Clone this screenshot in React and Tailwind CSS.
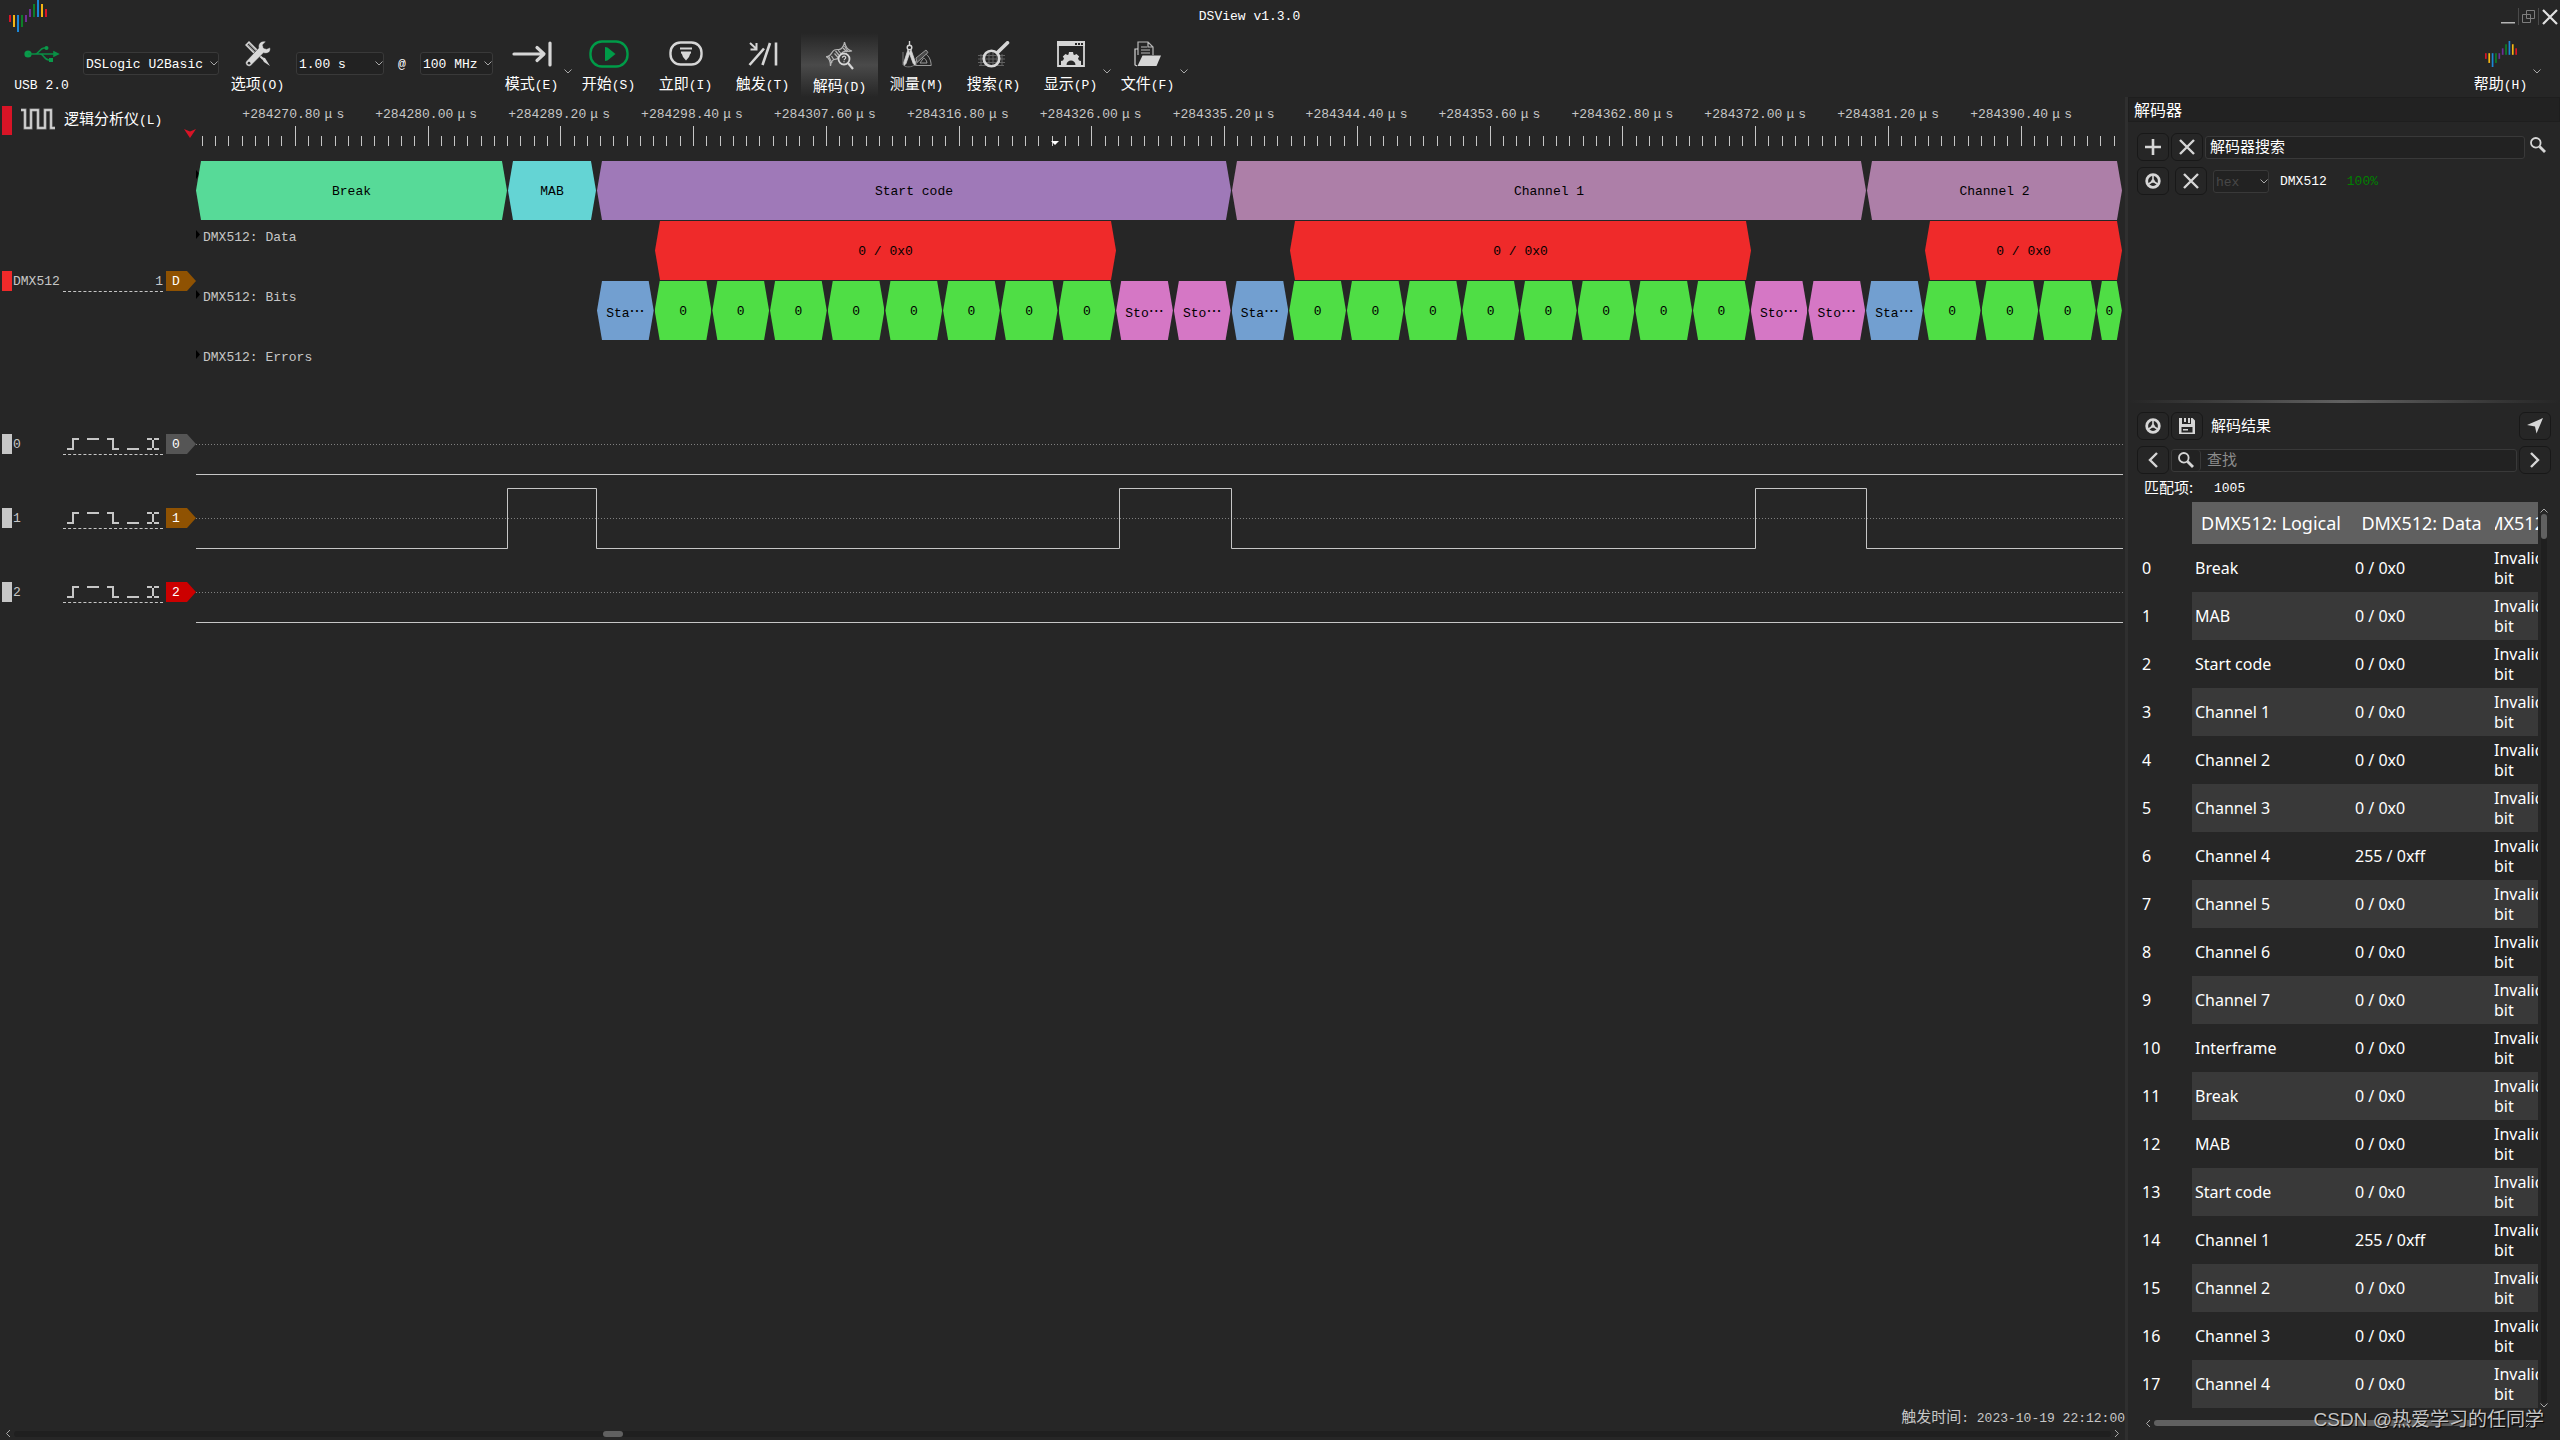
import React, { useState } from "react";
import clsx from "clsx";

const LOGO_BARS = [
    { x: 0, y: 15, h: 7, fill: "#d81426" },
    { x: 4, y: 15, h: 12, fill: "#f5b513" },
    { x: 8, y: 15, h: 17, fill: "#1b87d6" },
    { x: 12, y: 15, h: 12, fill: "#0d7f28" },
    { x: 16, y: 15, h: 7, fill: "#6f2f94" },
    { x: 20, y: 9, h: 8, fill: "#6f2f94" },
    { x: 24, y: 4, h: 13, fill: "#0d7f28" },
    { x: 28, y: 0, h: 17, fill: "#1b87d6" },
    { x: 32, y: 4, h: 13, fill: "#f5b513" },
    { x: 36, y: 9, h: 8, fill: "#d81426" },
];

// The visible time span is 1927 units wide, one unit per pixel at full size
const SPAN = 1927;
const BIT = 57.7;

const green = "bg-[#4fde45]";
const pink = "bg-[#d577c5]";
const blue = "bg-[#729fd0]";
const red = "bg-[#ef2a2a]";

const frame = (n) => [
    { w: BIT, text: "Sta…", color: blue },
    ...Array.from({ length: n }, () => ({ w: BIT, text: "0", color: green })),
    { w: BIT, text: "Sto…", color: pink },
    { w: BIT, text: "Sto…", color: pink },
];

const lanes = [
    {
        name: "",
        items: [
            { w: 312, text: "Break", color: "bg-[#57da98]" },
            { w: 89, text: "MAB", color: "bg-[#64d4d4]" },
            { w: 635, text: "Start code", color: "bg-[#9f79b8]" },
            { w: 635, text: "Channel 1", color: "bg-[#ad7fa8]" },
            { w: 256, text: "Channel 2", color: "bg-[#ad7fa8]" },
        ],
    },
    {
        name: "DMX512: Data",
        items: [
            { w: 459 },
            { w: 462, text: "0 / 0x0", color: red },
            { w: 173 },
            { w: 462, text: "0 / 0x0", color: red },
            { w: 173 },
            { w: 198, text: "0 / 0x0", color: red },
        ],
    },
    {
        name: "DMX512: Bits",
        items: [
            { w: 401 },
            ...frame(8),
            ...frame(8),
            { w: BIT, text: "Sta…", color: blue },
            { w: BIT, text: "0", color: green },
            { w: BIT, text: "0", color: green },
            { w: BIT, text: "0", color: green },
            { w: 26, text: "0", color: green },
        ],
    },
    { name: "DMX512: Errors", items: [] },
];

const channels = [
    { id: "0", color: "text-[#555555]", wave: "M0 67.5H1927" },
    {
        id: "1",
        color: "text-[#8f5202]",
        wave: "M0 67.5H311.5V7.5H400.5V67.5H923.5V7.5H1035.5V67.5H1559.5V7.5H1670.5V67.5H1927",
    },
    { id: "2", color: "text-[#cc0000]", wave: "M0 67.5H1927" },
];

const rulerLabels = Array.from({ length: 14 }, (_, i) => "+" + (284270.8 + i * 9.2).toFixed(2));

const results = [
    ["Break", "0 / 0x0"],
    ["MAB", "0 / 0x0"],
    ["Start code", "0 / 0x0"],
    ["Channel 1", "0 / 0x0"],
    ["Channel 2", "0 / 0x0"],
    ["Channel 3", "0 / 0x0"],
    ["Channel 4", "255 / 0xff"],
    ["Channel 5", "0 / 0x0"],
    ["Channel 6", "0 / 0x0"],
    ["Channel 7", "0 / 0x0"],
    ["Interframe", "0 / 0x0"],
    ["Break", "0 / 0x0"],
    ["MAB", "0 / 0x0"],
    ["Start code", "0 / 0x0"],
    ["Channel 1", "255 / 0xff"],
    ["Channel 2", "0 / 0x0"],
    ["Channel 3", "0 / 0x0"],
    ["Channel 4", "0 / 0x0"],
];

// Chinese runs are set a little larger than the Latin ones beside them
function Txt({ children }) {
    return children.split(/([\u3000-\u9fff…]+)/).map((part, i) =>
        i % 2 ? (
            <span key={i} className="text-[15px] font-['Noto_Sans_CJK_SC',sans-serif]">{part}</span>
        ) : (
            part
        )
    );
}

function Logo({ width, height }) {
    return (
        <svg width={width} height={height} viewBox="0 0 38 32" preserveAspectRatio="none" aria-hidden="true">
            {LOGO_BARS.map((b) => (
                <rect key={b.x} x={b.x} y={b.y} width="2" height={b.h} fill={b.fill} />
            ))}
        </svg>
    );
}

function Caret({ className }) {
    return (
        <svg width="8" height="5" viewBox="0 0 8 5" fill="none" stroke="#a8a8a8" className={className} aria-hidden="true">
            <path d="M.5 .5 4 4 7.5 .5" />
        </svg>
    );
}

function Combo({ label, value, options, className, disabled }) {
    return (
        <div className={clsx("relative h-[23px]", className)}>
            <select
                aria-label={label}
                defaultValue={value}
                disabled={disabled}
                className={clsx(
                    "h-full w-full appearance-none rounded-[3px] border border-[#393939] bg-[#222222] pt-[2px] pl-[2px] outline-none",
                    disabled ? "text-[#484848]" : "text-white"
                )}
            >
                {(options || [value]).map((o) => (
                    <option key={o}>{o}</option>
                ))}
            </select>
            <Caret className="pointer-events-none absolute top-[9px] right-[1px]" />
        </div>
    );
}

function UsbIcon() {
    return (
        <svg width="36" height="18" viewBox="0 0 36 18" fill="none" stroke="#0a8f45" strokeWidth="1.6">
            <circle cx="4" cy="9" r="3.6" fill="#0a9a4a" stroke="none" />
            <path d="M4 9H33M30 7l4 2-4 2zM11 9c4 0 5-6 9-6h2M16 9c4 0 4 6 9 6" />
            <circle cx="22.5" cy="3" r="2" fill="#0a9a4a" stroke="none" />
            <path d="M25 13h4v4h-4z" fill="#0a9a4a" stroke="none" />
        </svg>
    );
}

function ToolsIcon() {
    return (
        <svg width="26" height="26" viewBox="0 0 26 26" fill="none">
            <path d="M1 4 4 1l9 9-3 3z" fill="#8a8a8a" stroke="#d6d6d6" strokeWidth="1.4" />
            <path d="M3 3l8 8" stroke="#333" />
            <path d="M16 16l3 5 6 4-5-8z" fill="#d6d6d6" />
            <path d="M13 13l5 5" stroke="#d6d6d6" strokeWidth="2" />
            <path d="M25 6.500l-3.500 1.500-3-1-.8-3.200L21 .6c-4-1.600-8.400 1.500-7.300 6.400L1.300 20.200c-2.200 2.700 1.700 6.600 4.500 4.500L18.500 12c4.500 1.500 8-1.800 6.500-5.500z" fill="#d9d9d9" stroke="#262626" strokeWidth=".5" />
            <circle cx="4" cy="22.200" r="1.400" fill="#262626" />
        </svg>
    );
}

function ModeIcon() {
    return (
        <svg width="40" height="26" viewBox="0 0 40 26" fill="none" stroke="#d6d6d6" strokeWidth="3.200" strokeLinecap="round" strokeLinejoin="round">
            <path d="M2 13h29M25 6.500 32 13l-7 6.500M38 2v22" />
        </svg>
    );
}

function StartIcon() {
    return (
        <svg width="40" height="28" viewBox="0 0 40 28" fill="none">
            <rect x="1.500" y="1.500" width="37" height="25" rx="11.500" stroke="#009b48" strokeWidth="2.400" />
            <path d="M16 7l2.500 .5L26.500 14l-8 6.500-2.500 .5z" fill="#009b48" />
        </svg>
    );
}

function InstantIcon() {
    return (
        <svg width="34" height="26" viewBox="0 0 34 26" fill="none">
            <rect x="1.500" y="1.500" width="31" height="22" rx="10" stroke="#d6d6d6" strokeWidth="2.400" />
            <path d="M11 7.500h12M12 11.500h10" stroke="#d6d6d6" strokeWidth="2.200" />
            <path d="M12.500 12h9L20 16l-3 3.500L14 16z" fill="#d6d6d6" />
        </svg>
    );
}

function TriggerIcon() {
    return (
        <svg width="30" height="26" viewBox="0 0 30 26" fill="none" stroke="#d6d6d6" strokeWidth="2.600">
            <path d="M2 2l6 5.500M8.500 2v6.500H2.500" strokeWidth="2" />
            <path d="M1.500 24 16 7.500M14.500 24 22 2M28 1.500v23" />
        </svg>
    );
}

function DecodeIcon() {
    return (
        <svg width="28" height="28" viewBox="0 0 28 28" fill="none" stroke="#b4b4b4" strokeWidth="1.200">
            <path d="M0 14.500c5 1.500 5-5 8.500-6.500s5 1 7.500-2 2-4 2.500-6c1 5 4 8.500 7.500 9-5 1-6-1-9 1s-2 4-4 6-4.500 0-6.500 2.500-2 4-2 5.500C4.500 19.500 3 16 0 14.500z" />
            <path d="M3 15l3 6M5.500 14l2.500 4M9.500 9l5 6M12 8l4 5M8.500 11.500l4 4.500M17 6l4 4M18.500 4l3.500 5.500" />
            <circle cx="18" cy="17" r="5.500" fill="#3f3f3f" stroke="#d6d6d6" strokeWidth="1.800" />
            <path d="M22 21l5 6" stroke="#d6d6d6" strokeWidth="2.200" />
            <path d="M16.500 15.800c0-2.300 3.400-2 3.200 0-.1 1-1.600 1.200-1.600 2.400M18 19.300v1" stroke="#d6d6d6" />
        </svg>
    );
}

function MeasureIcon() {
    return (
        <svg width="30" height="27" viewBox="0 0 30 27" fill="none" stroke="#9a9a9a">
            <path d="M14 24.500V20l7-8c5 1 8 6 8.200 12.500zM18 22h7c-.5-3-2-4.500-3.500-5z" />
            <path d="M14 17l10-8 2 2.500-11 10z" fill="#4a4a4a" />
            <path d="M2 24.500c2 2 8 2 11-1M1 11v13" stroke="#777" />
            <circle cx="7.500" cy="6.500" r="2.300" stroke="#d6d6d6" strokeWidth="1.400" />
            <path d="M7.500 0v4" stroke="#d6d6d6" strokeWidth="1.400" />
            <path d="M6 8.500 1.800 21.500l.3 3 1.900-2L8 11M9 8.500l4.400 13-.3 3-1.900-2L7 11" fill="#d6d6d6" stroke="#d6d6d6" strokeWidth=".8" />
        </svg>
    );
}

function SearchToolIcon() {
    return (
        <svg width="32" height="27" viewBox="0 0 32 27" fill="none">
            <path d="M0 14.500h27M0 18h27M0 21.500h27M1 24.500h25M3 13v12M7 13v12M11 10v15M15 10v15M19 13v12M24 13v12" stroke="#616161" />
            <circle cx="13.500" cy="17.500" r="7.800" stroke="#d6d6d6" strokeWidth="2.600" />
            <path d="M19.500 11.500 29.500 1.800" stroke="#d6d6d6" strokeWidth="3.600" strokeLinecap="round" />
        </svg>
    );
}

function DisplayIcon() {
    return (
        <svg width="28" height="26" viewBox="0 0 28 26" fill="none">
            <path d="M1 1h26v24H1z" stroke="#d6d6d6" strokeWidth="1.800" />
            <path d="M0 0h28v5H0z" fill="#d6d6d6" />
            <path d="M18 2h2v2h-2zM21 2h2v2h-2zM24 2h2v2h-2z" fill="#262626" />
            <path d="M4 24v-4l2-.5 1-2-1.200-2 2.700-2.500 2 1 1-.5 .5-2.500h4l.5 2.500 1 .5 2-1 2.700 2.500-1.200 2 1 2 2 .5v4h-5.500c0-6-9-6-9 0z" fill="#d6d6d6" />
        </svg>
    );
}

function FileIcon() {
    return (
        <svg width="27" height="26" viewBox="0 0 27 26" fill="none" stroke="#b8b8b8" strokeWidth="1.200">
            <path d="M4 14V1h10l5 5v8M14 1v5h5M7 6h6M7 9h9M7 12h9" />
            <path d="M4 8H1v16l2 1" stroke="#d6d6d6" />
            <path d="M8.500 14.500H27L22.500 25H3.500z" fill="#d6d6d6" stroke="none" />
        </svg>
    );
}

const tools = [
    { label: "模式(E)", icon: ModeIcon, menu: true },
    { label: "开始(S)", icon: StartIcon },
    { label: "立即(I)", icon: InstantIcon },
    { label: "触发(T)", icon: TriggerIcon },
    { label: "解码(D)", icon: DecodeIcon },
    { label: "测量(M)", icon: MeasureIcon },
    { label: "搜索(R)", icon: SearchToolIcon },
    { label: "显示(P)", icon: DisplayIcon, menu: true },
    { label: "文件(F)", icon: FileIcon, menu: true },
];

function ToolButton({ label, icon: Icon, menu, active, onClick, className }) {
    return (
        <button
            type="button"
            onClick={onClick}
            className={clsx(
                "relative flex h-16 w-[77px] shrink-0 flex-col items-center",
                active ? "bg-linear-to-b from-[#262626] via-[#4a4a4a] to-[#262626] pt-[9px]" : "pt-[7px]",
                className
            )}
        >
            <span className="flex h-7 items-center">
                <Icon />
            </span>
            <span className="mt-[5px] leading-5"><Txt>{label}</Txt></span>
            {menu && <Caret className="absolute top-[36px] right-[-2px]" />}
        </button>
    );
}

function TitleBar() {
    return (
        <div className="flex h-[33px] items-center">
            <div className="w-[60px] self-start pl-[9px]">
                <Logo width={38} height={32} />
            </div>
            <h1 className="flex-1 pt-px pr-[62px] text-center">DSView v1.3.0</h1>
            <div className="flex items-center gap-[3px] pr-[2px]">
                <button type="button" aria-label="最小化" className="pt-3">
                    <svg width="14" height="2" viewBox="0 0 14 2"><path d="M0 0h14v1.500H0z" fill="#b4b4b4" /></svg>
                </button>
                <span className="h-[17px] w-px bg-[#4a4a4a]" />
                <button type="button" aria-label="还原">
                    <svg width="13" height="13" viewBox="0 0 13 13" fill="none" stroke="#7d7d7d">
                        <path d="M4.500 .5h8v8h-8zM.5 4.500h8v8h-8z" />
                    </svg>
                </button>
                <span className="h-[17px] w-px bg-[#4a4a4a]" />
                <button type="button" aria-label="关闭">
                    <svg width="16" height="16" viewBox="0 0 16 16" stroke="#e0e0e0" strokeWidth="2.200"><path d="M1 1l14 14M15 1 1 15" /></svg>
                </button>
            </div>
        </div>
    );
}

function Toolbar() {
    const [active, setActive] = useState("解码(D)");
    return (
        <div className="flex h-16 text-white">
            <div className="flex w-[83px] flex-col items-center pt-[12px]">
                <UsbIcon />
                <span className="mt-[13px] leading-5">USB 2.0</span>
            </div>
            <Combo label="设备" value="DSLogic U2Basic" className="mt-[19px] w-[136px]" />
            <ToolButton label="选项(O)" icon={ToolsIcon} />
            <Combo label="时长" value="1.00 s" className="mt-[19px] w-[88px]" />
            <span className="mt-[22px] w-9 text-center leading-5">@</span>
            <Combo label="采样率" value="100 MHz" className="mt-[19px] w-[73px]" />
            {tools.map((t) => (
                <ToolButton key={t.label} {...t} active={t.label === active} onClick={() => setActive(t.label)} />
            ))}
            <div className="flex-1" />
            <ToolButton
                label="帮助(H)"
                icon={() => <Logo width={32} height={26} />}
                menu
                className="mr-[21px]"
            />
        </div>
    );
}

function Tag({ children, color }) {
    return (
        <span className={clsx("relative h-5 w-[30px] shrink-0", color)}>
            <svg width="30" height="20" viewBox="0 0 30 20" className="absolute inset-0" aria-hidden="true">
                <path d="M0 0h21l9 10-9 10H0z" fill="currentColor" />
            </svg>
            <span className="relative block w-5 text-center leading-[22px] text-white">{children}</span>
        </span>
    );
}

function TriggerMarks() {
    return (
        <svg width="100" height="20" viewBox="0 0 100 20" fill="none" stroke="#c6c6c6" strokeWidth="2" shapeRendering="crispEdges">
            <path d="M4 15h6M10 16V4M9 5h7M24 5h12M44 5h7M50 4v12M50 15h6M64 15h12M84 5h5M91 5h5M84 15h5M91 15h5M90 6v8" />
        </svg>
    );
}

function Ruler() {
    return (
        <div className="min-w-0 flex-1 text-[#c6c6c6]">
            <div className="flex h-[29px] items-center pt-[7px] pl-[1.6%]">
                {rulerLabels.map((label) => (
                    <span key={label} className="w-[7.01%] shrink-0 text-center whitespace-nowrap">
                        {label}
                        <span className="inline-block w-4 text-center">μ</span>s
                    </span>
                ))}
            </div>
            <svg viewBox={`0 0 ${SPAN} 20`} preserveAspectRatio="none" className="block h-5 w-full" aria-hidden="true">
                {Array.from({ length: 145 }, (_, i) => {
                    const x = Math.floor(6.3 + i * 13.277) + 0.5;
                    return (
                        <line key={i} x1={x} x2={x} y1={i % 10 === 7 ? 0 : 10} y2="20" stroke="#c6c6c6" />
                    );
                })}
                <path d="M855 15h8l-4 4z" fill="#fff" />
            </svg>
        </div>
    );
}

function RulerRow() {
    return (
        <div className="flex h-16">
            <div className="relative flex w-[196px] shrink-0 pt-[9px] pl-[2px] text-white">
                <span className="h-[29px] w-[10px] bg-[#d81426]" />
                <svg width="34" height="22" viewBox="0 0 34 22" fill="none" className="mt-[2px] ml-[9px]" aria-hidden="true">
                    <path d="M0 2h4v18h6V2h7v18h7V2h6v18h4" stroke="#8a8a8a" strokeWidth="3" />
                    <path d="M0 2h4v18h6V2h7v18h7V2h6v18h4" stroke="#dedede" strokeWidth="1.500" />
                </svg>
                <span className="mt-[2px] ml-[9px] leading-5 whitespace-nowrap"><Txt>逻辑分析仪(L)</Txt></span>
                <svg width="12" height="9" viewBox="0 0 12 9" className="absolute right-0 bottom-[23px]" aria-hidden="true">
                    <path d="M0 0l6 2.500L12 0 6 9z" fill="#d81426" />
                </svg>
            </div>
            <Ruler />
        </div>
    );
}

function Lane({ name, items }) {
    return (
        <div className="relative h-[60px] pb-px">
            <div className="absolute top-[9px] left-0 flex items-start gap-[3px]">
                <svg width="4" height="9" viewBox="0 0 4 9" aria-hidden="true"><path d="M0 0l4 4.500L0 9z" fill="#000" /></svg>
                <span className="leading-4 whitespace-nowrap">{name}</span>
            </div>
            <div className="relative flex h-full overflow-hidden">
                {items.map((it, i) => (
                    <div key={i} className="h-full shrink-0 pr-px" style={{ width: `${(it.w / SPAN) * 100}%` }}>
                        {it.text && (
                            <div
                                className={clsx(
                                    "flex h-full items-center justify-center overflow-hidden pt-[2px] whitespace-nowrap text-black [clip-path:polygon(5px_0,calc(100%-5px)_0,100%_50%,calc(100%-5px)_100%,5px_100%,0_50%)]",
                                    it.color
                                )}
                            >
                                <span><Txt>{it.text}</Txt></span>
                            </div>
                        )}
                    </div>
                ))}
            </div>
        </div>
    );
}

function DecoderTrack() {
    return (
        <div className="flex text-[#c6c6c6]">
            <div className="flex w-[196px] shrink-0 items-center pl-[2px]">
                <span className="h-5 w-[10px] bg-[#ef2a2a]" />
                <span className="w-[51px] pt-[2px] pl-px leading-5">DMX512</span>
                <span className="mt-px mr-[3px] h-[21px] w-[100px] border-b border-dashed border-[#c6c6c6] text-right leading-[22px]">1</span>
                <Tag color="text-[#8f5202]">D</Tag>
            </div>
            <div className="min-w-0 flex-1">
                {lanes.map((lane, i) => (
                    <Lane key={i} {...lane} />
                ))}
            </div>
        </div>
    );
}

function ChannelTrack({ id, color, wave }) {
    return (
        <div className="flex h-[74px] text-[#c6c6c6]">
            <div className="flex w-[196px] shrink-0 items-center pl-[2px]">
                <span className="h-5 w-[10px] bg-[#c6c6c6]" />
                <span className="w-[51px] pt-[2px] pl-px leading-5">{id}</span>
                <span className="mt-px mr-[3px] h-[21px] w-[100px] border-b border-dashed border-[#c6c6c6]">
                    <TriggerMarks />
                </span>
                <Tag color={color}>{id}</Tag>
            </div>
            <svg viewBox={`0 0 ${SPAN} 74`} preserveAspectRatio="none" className="block h-full min-w-0 flex-1" fill="none" aria-hidden="true">
                <path d="M0 37.500H1927" stroke="#808080" strokeDasharray="1 2" />
                <path d={wave} stroke="#c6c6c6" />
            </svg>
        </div>
    );
}

function IconButton({ label, children, className }) {
    return (
        <button
            type="button"
            aria-label={label}
            className={clsx("flex h-7 w-8 shrink-0 items-center justify-center rounded-md border border-[#181818]", className)}
        >
            {children}
        </button>
    );
}

const CrossIcon = () => (
    <svg width="16" height="16" viewBox="0 0 16 16" stroke="#d6d6d6" strokeWidth="2.400"><path d="M1 1l14 14M15 1 1 15" /></svg>
);

const WheelIcon = () => (
    <svg width="16" height="16" viewBox="0 0 16 16" fill="none" stroke="#d6d6d6">
        <circle cx="8" cy="8" r="6.300" strokeWidth="2.800" />
        <path d="M8 2v6M8 8l-5 3.500M8 8l5 3.500" strokeWidth="1.600" />
        <circle cx="8" cy="8" r="1.800" fill="#d6d6d6" stroke="none" />
    </svg>
);

const LensIcon = () => (
    <svg width="16" height="16" viewBox="0 0 16 16" fill="none" stroke="#d6d6d6">
        <circle cx="5.800" cy="5.800" r="4.800" strokeWidth="1.800" />
        <path d="M9.500 9.500 15 15" strokeWidth="2.800" />
    </svg>
);

function DecoderSection() {
    return (
        <section className="h-[303px]">
            <h2 className="h-[25px] border border-[#1e1e1e] bg-[#222222] pl-[5px] text-base leading-[23px] font-['Noto_Sans_CJK_SC',sans-serif]">
                解码器
            </h2>
            <div className="mt-[11px] flex items-center pl-[9px]">
                <IconButton label="添加解码器">
                    <svg width="16" height="16" viewBox="0 0 16 16" stroke="#d6d6d6" strokeWidth="2.600"><path d="M8 0v16M0 8h16" /></svg>
                </IconButton>
                <IconButton label="删除解码器" className="ml-[2px]"><CrossIcon /></IconButton>
                <input
                    type="text"
                    aria-label="解码器搜索"
                    defaultValue="解码器搜索"
                    className="ml-[2px] h-[23px] min-w-0 flex-1 rounded-[3px] border border-[#393939] bg-[#222222] px-1 pb-[3px] text-[15px] outline-none font-['Noto_Sans_CJK_SC',sans-serif]"
                />
                <button type="button" aria-label="搜索" className="mr-[14px] ml-[5px] pb-1"><LensIcon /></button>
            </div>
            <div className="mt-[6px] flex items-center pl-[9px]">
                <IconButton label="DMX512 设置"><WheelIcon /></IconButton>
                <IconButton label="删除 DMX512" className="ml-[6px]"><CrossIcon /></IconButton>
                <Combo label="格式" value="hex" disabled className="ml-[6px] w-14" />
                <span className="ml-[11px] pt-[2px]">DMX512</span>
                <span className="ml-5 pt-[2px] text-[#008000]">100%</span>
            </div>
        </section>
    );
}

function ResultTable() {
    return (
        <div className="flex pl-[9px]">
            <div className="min-w-0 flex-1 overflow-hidden">
                <table className="w-[448px] table-fixed text-base leading-5 font-['Noto_Sans',sans-serif]">
                    <thead>
                        <tr className="h-[42px] text-lg">
                            <th className="w-[55px]" aria-label="#" />
                            <th className="w-[158px] bg-[#606060] p-0 font-normal whitespace-nowrap">DMX512: Logical</th>
                            <th className="w-[143px] bg-[#606060] p-0 font-normal whitespace-nowrap">DMX512: Data</th>
                            <th className="bg-[#606060] p-0 pl-[2px] font-normal">
                                <span className="flex justify-center overflow-hidden whitespace-nowrap">
                                    <span>DMX512: Errors</span>
                                </span>
                            </th>
                        </tr>
                    </thead>
                    <tbody>
                        {results.map(([logical, data], i) => (
                            <tr key={i} className="group h-12">
                                <th className="p-0 pl-[5px] text-left font-normal">{i}</th>
                                <td className="p-0 pl-[3px] group-even:bg-[#393939]">{logical}</td>
                                <td className="p-0 pl-[5px] group-even:bg-[#393939]">{data}</td>
                                <td className="p-0 pl-px group-even:bg-[#393939]">Invalid<br />bit</td>
                            </tr>
                        ))}
                    </tbody>
                </table>
            </div>
            <div className="mr-3 ml-[2px] flex w-2 flex-col items-center pt-[6px]">
                <Caret className="rotate-180" />
                <div className="mt-px w-[6px] flex-1 rounded-full bg-[#1f1f1f]">
                    <div className="h-[25px] rounded-full bg-[#606060]" />
                </div>
                <Caret />
            </div>
        </div>
    );
}

function ResultSection() {
    return (
        <section className="relative flex flex-1 flex-col">
            <div className="h-[3px] bg-linear-to-r from-[#262626] via-[#626262] to-[#262626]" />
            <div className="mt-[9px] flex items-center pr-[9px] pl-[9px]">
                <IconButton label="结果设置"><WheelIcon /></IconButton>
                <IconButton label="保存" className="ml-[2px]">
                    <svg width="16" height="16" viewBox="0 0 16 16">
                        <path d="M0 0h3v6h9V0h1.500L16 2.500V16H0z" fill="#d6d6d6" />
                        <path d="M5 0h2v4H5zM9 0h2v5H9z" fill="#d6d6d6" />
                        <path d="M2.500 9h11v5.500h-11z" fill="#262626" />
                        <path d="M4 11h5v1.500H4z" fill="#d6d6d6" />
                    </svg>
                </IconButton>
                <h2 className="ml-2 flex-1"><Txt>解码结果</Txt></h2>
                <IconButton label="定位">
                    <svg width="16" height="16" viewBox="0 0 16 16"><path d="M16 0 9.500 15.500 8 8.500 0 7z" fill="#d6d6d6" /></svg>
                </IconButton>
            </div>
            <div className="mt-[6px] flex items-center pr-[9px] pl-[9px]">
                <IconButton label="上一个">
                    <svg width="10" height="16" viewBox="0 0 10 16" fill="none" stroke="#d6d6d6" strokeWidth="2.400"><path d="M9 1 2 8l7 7" /></svg>
                </IconButton>
                <div className="mx-[2px] flex h-[23px] min-w-0 flex-1 rounded-[3px] border border-[#393939] bg-[#222222]">
                    <button type="button" aria-label="查找" className="flex w-[29px] items-center justify-center rounded border-r border-[#393939]">
                        <LensIcon />
                    </button>
                    <input
                        type="text"
                        aria-label="查找"
                        placeholder="查找"
                        className="min-w-0 flex-1 px-[6px] pb-[2px] text-[15px] outline-none placeholder:text-[#8c8c8c] font-['Noto_Sans_CJK_SC',sans-serif]"
                    />
                </div>
                <IconButton label="下一个">
                    <svg width="10" height="16" viewBox="0 0 10 16" fill="none" stroke="#d6d6d6" strokeWidth="2.400"><path d="M1 1l7 7-7 7" /></svg>
                </IconButton>
            </div>
            <p className="flex h-7 items-center pl-4">
                <span className="w-[70px] pb-[2px] text-[15px] font-['Noto_Sans_CJK_SC',sans-serif]">匹配项:</span>
                <span className="pt-[2px]">1005</span>
            </p>
            <ResultTable />
            <div className="mt-3 mr-7 ml-4 flex items-center gap-[2px]">
                <Caret className="rotate-90" />
                <div className="h-[6px] flex-1 rounded-full bg-[#1f1f1f]">
                    <div className="h-full w-[87%] rounded-full bg-[#606060]" />
                </div>
                <Caret className="-rotate-90" />
            </div>
            <span className="absolute right-4 bottom-[6px] text-[19px] leading-7 whitespace-nowrap text-[#c4c4c4] [text-shadow:1px_1px_1px_#000] font-['Liberation_Sans','Noto_Sans_CJK_SC',sans-serif]">
                CSDN @热爱学习的任同学
            </span>
        </section>
    );
}

export default function App() {
    return (
        <div
            lang="zh-CN"
            className="flex min-h-screen flex-col overflow-hidden bg-[#262626] text-[13px] text-white font-['Liberation_Mono','Noto_Sans_CJK_SC',monospace]"
        >
            <header>
                <TitleBar />
                <Toolbar />
            </header>
            <div className="flex flex-1">
                <main className="flex min-w-0 flex-1 flex-col border-r-[3px] border-[#2f2f2f]">
                    <div className="pr-[2px]">
                        <RulerRow />
                        <DecoderTrack />
                        <div className="pt-[6px]">
                            {channels.map((c) => (
                                <ChannelTrack key={c.id} {...c} />
                            ))}
                        </div>
                    </div>
                    <div className="flex-1" />
                    <p className="text-right leading-4 text-[#c6c6c6]"><Txt>触发时间: 2023-10-19 22:12:00</Txt></p>
                    <div className="flex h-[13px] items-center gap-[2px] pr-1 pl-1">
                        <Caret className="rotate-90" />
                        <div className="h-[6px] flex-1 rounded-full bg-[#1f1f1f] pl-[27.8%]">
                            <div className="h-full w-5 rounded-full bg-[#606060]" />
                        </div>
                        <Caret className="-rotate-90" />
                    </div>
                </main>
                <aside className="flex w-[432px] shrink-0 flex-col">
                    <DecoderSection />
                    <ResultSection />
                </aside>
            </div>
        </div>
    );
}
